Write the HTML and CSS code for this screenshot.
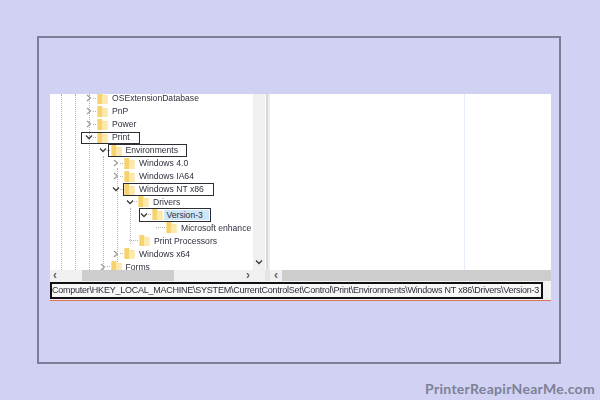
FILE: index.html
```html
<!DOCTYPE html>
<html lang="en">
<head>
<meta charset="utf-8">
<title>Registry path</title>
<link rel="stylesheet" href="styles.css">
</head>
<body>
<svg class="defs" width="0" height="0" aria-hidden="true">
  <symbol id="folder" viewBox="0 0 10 11">
    <path d="M0 0h5v2h5v9H0z" fill="#fbe39a"/>
    <path d="M0 0h4.500v11H0z" fill="#f6d36d"/>
    <path d="M4.500 3h5.500v8H4.500z" fill="#fde9ae"/>
  </symbol>
  <symbol id="right" viewBox="0 0 8 8"><path d="M2 1l3.500 3L2 7" fill="none" stroke="#9a9a9a" stroke-width="1.200"/></symbol>
  <symbol id="down" viewBox="0 0 8 8"><path d="M1 2.500l3 3 3-3" fill="none" stroke="#3c3c3c" stroke-width="1.300"/></symbol>
</svg>
<main class="frame">
  <section class="shot">
    <div class="panes">
      <div class="tree">
        <div class="guides">
          <i class="guide g1"></i><i class="guide g2"></i><i class="guide g3"></i>
          <i class="guide g4"></i><i class="guide g5"></i><i class="guide g6"></i>
        </div>
        <div class="rows">
          <div class="row l0"><svg class="chev"><use href="#right"/></svg><i class="dash"></i><svg class="folder"><use href="#folder"/></svg><span class="label">OSExtensionDatabase</span></div>
          <div class="row l0"><svg class="chev"><use href="#right"/></svg><i class="dash"></i><svg class="folder"><use href="#folder"/></svg><span class="label">PnP</span></div>
          <div class="row l0"><svg class="chev"><use href="#right"/></svg><i class="dash"></i><svg class="folder"><use href="#folder"/></svg><span class="label">Power</span></div>
          <div class="row l0"><svg class="chev"><use href="#down"/></svg><i class="dash"></i><svg class="folder"><use href="#folder"/></svg><span class="label">Print</span><b class="mark m-print"></b></div>
          <div class="row l1"><svg class="chev"><use href="#down"/></svg><i class="dash"></i><svg class="folder"><use href="#folder"/></svg><span class="label">Environments</span><b class="mark m-env"></b></div>
          <div class="row l2"><svg class="chev"><use href="#right"/></svg><i class="dash"></i><svg class="folder"><use href="#folder"/></svg><span class="label">Windows 4.0</span></div>
          <div class="row l2"><svg class="chev"><use href="#right"/></svg><i class="dash"></i><svg class="folder"><use href="#folder"/></svg><span class="label">Windows IA64</span></div>
          <div class="row l2"><svg class="chev"><use href="#down"/></svg><i class="dash"></i><svg class="folder"><use href="#folder"/></svg><span class="label">Windows NT x86</span><b class="mark m-nt"></b></div>
          <div class="row l3"><svg class="chev"><use href="#down"/></svg><i class="dash"></i><svg class="folder"><use href="#folder"/></svg><span class="label">Drivers</span></div>
          <div class="row l4"><svg class="chev"><use href="#down"/></svg><i class="dash"></i><svg class="folder"><use href="#folder"/></svg><span class="label selected">Version-3</span><b class="mark m-ver"></b></div>
          <div class="row l5"><span class="chev"></span><i class="dash dash-long"></i><svg class="folder"><use href="#folder"/></svg><span class="label">Microsoft enhance</span></div>
          <div class="row l3"><span class="chev"></span><i class="dash dash-long"></i><svg class="folder"><use href="#folder"/></svg><span class="label">Print Processors</span></div>
          <div class="row l2"><svg class="chev"><use href="#right"/></svg><i class="dash"></i><svg class="folder"><use href="#folder"/></svg><span class="label">Windows x64</span></div>
          <div class="row l1"><svg class="chev"><use href="#right"/></svg><i class="dash"></i><svg class="folder"><use href="#folder"/></svg><span class="label">Forms</span></div>
        </div>
        <div class="vscroll"><svg class="vdown"><use href="#down"/></svg></div>
      </div>
      <div class="divider"></div>
      <div class="values"></div>
    </div>
    <div class="hbars">
      <div class="hbar-left">
        <span class="arrow">&#8249;</span>
        <span class="thumb"></span>
        <span class="arrow">&#8250;</span>
      </div>
      <div class="hbar-gap"></div>
      <div class="hbar-right"><span class="arrow arrow-box">&#8249;</span><span class="thumb-full"></span></div>
    </div>
    <div class="status"><div class="path">Computer\HKEY_LOCAL_MACHINE\SYSTEM\CurrentControlSet\Control\Print\Environments\Windows NT x86\Drivers\Version-3</div></div>
  </section>
</main>
<footer class="brand">PrinterReapirNearMe.com</footer>
</body>
</html>
```
FILE: styles.css
```css
* { box-sizing: border-box; }
html, body { margin: 0; height: 100%; }
body {
  width: 600px;
  height: 400px;
  overflow: hidden;
  background: #d0d1f3;
  font-family: "Liberation Sans", sans-serif;
}
.defs { position: absolute; }
.frame {
  width: 524px;
  height: 328px;
  margin: 36px 0 0 37px;
  padding: 56px 0 0 11px;
  border: 2px solid #7a7f95;
}
.shot {
  width: 501px;
  height: 207px;
  background: #fff;
  display: flex;
  flex-direction: column;
  border-bottom: 1px solid #e0705c;
}
.panes { display: flex; height: 176px; }
.tree {
  position: relative;
  width: 215px;
  display: flex;
  overflow: hidden;
}
.rows { flex: 1; min-width: 0; margin-top: -2px; filter: blur(0.45px); }
.row {
  position: relative;
  height: 12.95px;
  display: flex;
  align-items: center;
  color: #303040;
  font-size: 8.6px;
  white-space: nowrap;
}
.l0 { padding-left: 35px; }
.l1 { padding-left: 48.500px; }
.l2 { padding-left: 62px; }
.l3 { padding-left: 76px; }
.l4 { padding-left: 89.500px; }
.l5 { padding-left: 103px; }
.chev { width: 8px; height: 8px; flex: none; display: block; }
.dash {
  width: 3px;
  margin-right: 1px;
  flex: none;
  border-top: 1px dotted #b4b4b4;
}
.folder { width: 11px; height: 11px; flex: none; }
.label { margin-left: 3px; padding: 0 1px; }
.selected { background: #cde6f9; padding-right: 6px; margin-left: 1px; padding-left: 3px; }
.dash-long { margin-left: -5px; width: 9px; }
.mark {
  position: absolute;
  border: 1.500px solid #2c2c34;
}
.m-print { left: 31px; width: 59px; top: 1px; height: 12px; }
.m-env { left: 58px; width: 79px; top: 0; height: 13px; }
.m-nt { left: 73px; width: 91px; top: 0; height: 13px; }
.m-ver { left: 89px; width: 72px; top: 0; height: 14px; }
.guides { position: absolute; inset: 0; }
.guide {
  position: absolute;
  top: 0;
  border-left: 1px dotted #b4b4b4;
}
.g1 { left: 11px; height: 176px; }
.g2 { left: 25px; height: 176px; }
.g3 { left: 39px; height: 176px; }
.g4 { left: 53px; top: 62px; height: 114px; }
.g5 { left: 67px; top: 74px; height: 94px; }
.g6 { left: 80px; top: 114px; height: 36px; }
.vscroll {
  position: relative;
  width: 12px;
  margin-left: -12px;
  background: #f0f0f0;
  flex: none;
}
.vdown { position: absolute; left: 2px; bottom: 4px; width: 8px; height: 8px; }
.divider {
  width: 5px;
  background: linear-gradient(90deg, #fff 0 1px, #d8d8d8 1px 3px, #eee 3px);
}
.values {
  flex: 1;
  background: linear-gradient(90deg, transparent 194px, #e6eef8 194px 195px, transparent 195px);
}
.hbars { display: flex; height: 11px; }
.hbar-left {
  width: 215px;
  background: #f0f0f0;
  display: flex;
  align-items: center;
  justify-content: space-between;
  padding: 0 15px 0 3px;
  position: relative;
}
.thumb { position: absolute; left: 32px; top: 0; width: 92px; height: 11px; background: #cdcdcd; }
.arrow { font-size: 12px; line-height: 11px; color: #606060; font-weight: 700; }
.hbar-gap { width: 5px; background: #e4e4e4; }
.hbar-right { flex: 1; display: flex; background: #cdcdcd; }
.arrow-box { width: 12px; text-align: center; background: #f0f0f0; }
.thumb-full { flex: 1; }
.status { flex: 1; background: #f3f3f3; padding: 1px 8px 0 0; }
.path {
  height: 17px;
  border: 2px solid #101014;
  background: #f8f8f8;
  color: #2c2c38;
  font-size: 9px;
  letter-spacing: -0.24px;
  line-height: 13px;
  white-space: nowrap;
  overflow: hidden;
  filter: blur(0.35px);
}
.brand {
  margin-top: 16px;
  padding-right: 5px;
  text-align: right;
  color: #7d8196;
  font-family: Lato, sans-serif;
  font-size: 14px;
  font-weight: 700;
  letter-spacing: 0.3px;
  line-height: 18px;
}
```
